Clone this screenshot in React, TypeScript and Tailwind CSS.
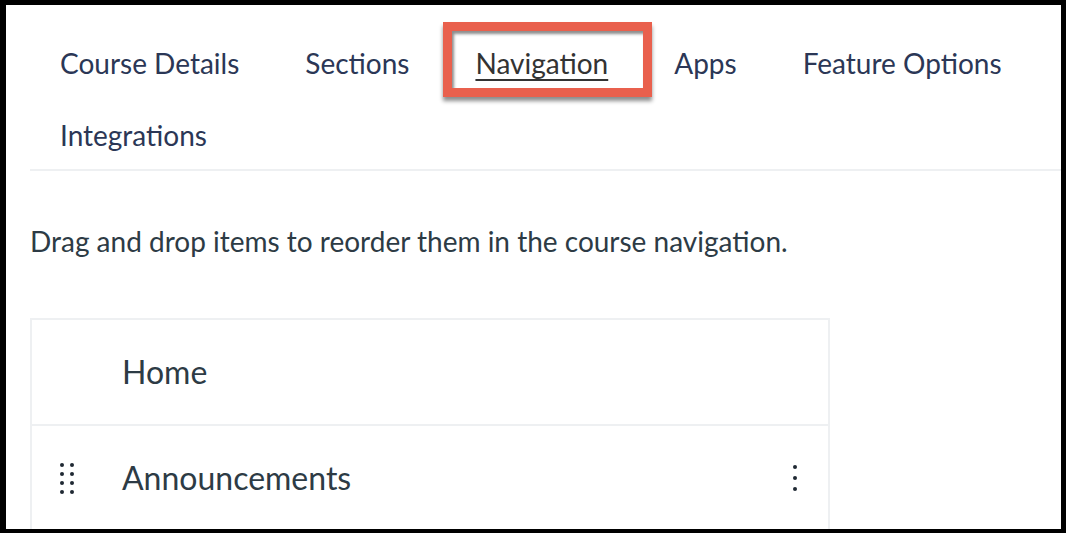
import React from "react"

const tabs = ["Course Details", "Sections", "Navigation", "Apps", "Feature Options"]

function DragHandle() {
  return (
    <div className="grid grid-cols-2 gap-x-[6px] gap-y-[5px] w-[14px]">
      {Array.from({ length: 8 }).map((_, i) => (
        <span key={i} className="block w-[4px] h-[4px] rounded-full bg-[#1f2933]" />
      ))}
    </div>
  )
}

function Kebab() {
  return (
    <div className="flex flex-col gap-[7px]">
      <span className="block w-[4px] h-[4px] rounded-full bg-[#1f2933]" />
      <span className="block w-[4px] h-[4px] rounded-full bg-[#1f2933]" />
      <span className="block w-[4px] h-[4px] rounded-full bg-[#1f2933]" />
    </div>
  )
}

export default function App() {
  return (
    <div className="w-[1066px] h-[533px] bg-black pt-[5px] pl-[6px] pr-[5px] pb-[4px] font-['Lato',sans-serif]">
      <div className="w-full h-full bg-white overflow-hidden">
        {/* Tabs */}
        <div className="pl-[54px] pt-[40px] flex flex-wrap gap-x-[66px] text-[28px] leading-none text-[#2b3756]">
          {tabs.map((t) =>
            t === "Navigation" ? (
              <div key={t} className="relative h-[36px] flex items-center">
                <span className="underline underline-offset-[5px] decoration-[1.5px] text-[#333]">{t}</span>
                {/* highlight box */}
                <div className="absolute left-[-32px] right-[-44px] top-[-23px] bottom-[-16px] border-[9px] border-[#e9604d] shadow-[0_4px_4px_rgba(0,0,0,0.45),inset_2px_3px_3px_rgba(0,0,0,0.45)]" />
              </div>
            ) : (
              <div key={t} className="h-[36px] flex items-center">
                {t}
              </div>
            )
          )}
        </div>
        <div className="pl-[54px] mt-[36px] h-[36px] flex items-center text-[28px] leading-none text-[#2b3756]">
          Integrations
        </div>
        <div className="ml-[24px] mt-[16px] h-[2px] bg-[#eef0f2]" />

        {/* Description */}
        <p className="ml-[24px] mt-[55px] text-[28px] leading-[30px] text-[#2d3b45]">
          Drag and drop items to reorder them in the course navigation.
        </p>

        {/* Nav list */}
        <div className="ml-[24px] mt-[62px] w-[800px] border-2 border-[#eef0f2] text-[32px] text-[#2d3b45]">
          <div className="h-[104px] flex items-center pl-[90px]">Home</div>
          <div className="h-[106px] border-t-2 border-[#eef0f2] flex items-center pl-[28px] pr-[31px]">
            <DragHandle />
            <span className="ml-[48px] flex-1">Announcements</span>
            <Kebab />
          </div>
        </div>
      </div>
    </div>
  )
}
